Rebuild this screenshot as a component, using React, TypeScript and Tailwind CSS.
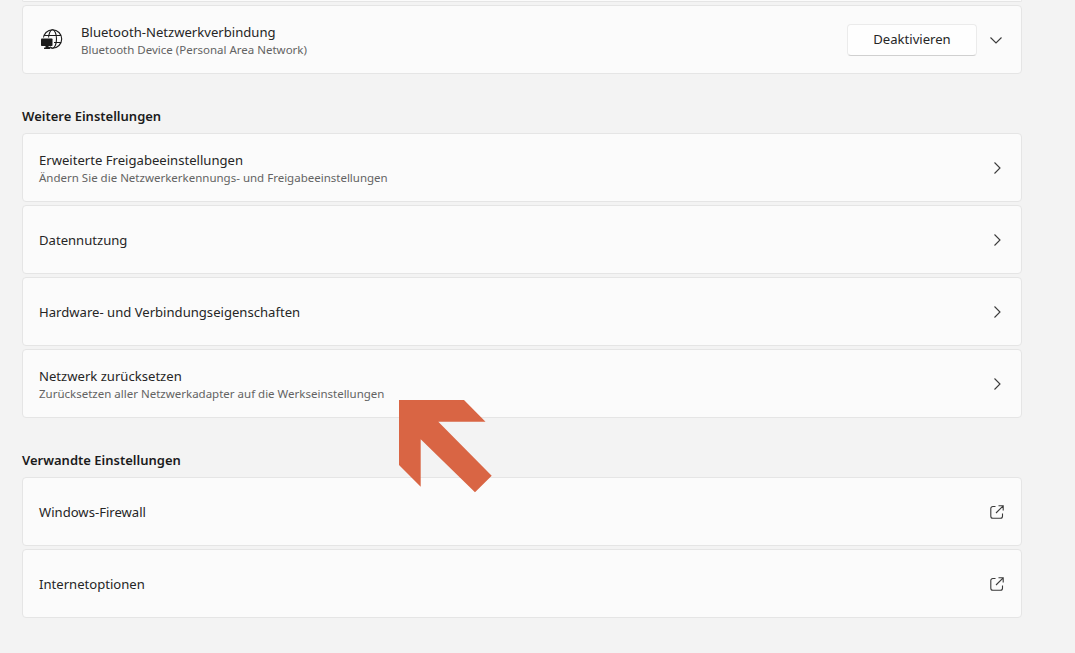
import React from "react";

function Chevron() {
  return (
    <svg width="16" height="16" viewBox="0 0 16 16" fill="none" stroke="#3a3a3a" strokeWidth="1.1" className="shrink-0">
      <path d="M5.5 2.5 L11 8 L5.5 13.5" />
    </svg>
  );
}

function External() {
  return (
    <svg width="16" height="16" viewBox="0 0 16 16" fill="none" stroke="#3a3a3a" strokeWidth="1.1" className="shrink-0">
      <path d="M6.5 2.5 H3.8 A2 2 0 0 0 1.8 4.5 V12.2 A2 2 0 0 0 3.8 14.2 H11.5 A2 2 0 0 0 13.5 12.2 V9.5" />
      <path d="M9.5 1.8 H14.2 V6.5 M14.2 1.8 L7 9" />
    </svg>
  );
}

function GlobeMonitor() {
  return (
    <svg width="22" height="22" viewBox="0 0 22 22" fill="none" className="ml-[2px] shrink-0">
      <g stroke="#1b1b1b" strokeWidth="1.1">
        <circle cx="11.5" cy="10" r="9.2" />
        <ellipse cx="11.5" cy="10" rx="4" ry="9.2" />
        <path d="M3 6.5 H20 M13 13.5 H20" />
      </g>
      <rect x="0" y="8.5" width="12.5" height="9" fill="#fbfbfb" />
      <rect x="0" y="9.5" width="11.5" height="7.5" rx="0.8" fill="#1b1b1b" />
      <rect x="4.5" y="17" width="3" height="2" fill="#1b1b1b" />
      <rect x="3" y="18.6" width="6" height="1.3" rx="0.5" fill="#1b1b1b" />
    </svg>
  );
}

function Row({ title, sub, icon }: { title: string; sub?: string; icon: "chevron" | "external" }) {
  return (
    <div className="flex h-[69px] items-center justify-between rounded-[4px] border border-[#e5e5e5] bg-[#fbfbfb] pl-4 pr-4">
      <div className="flex flex-col">
        <span className="text-[13.1px] leading-[18px] text-[#262626]">{title}</span>
        {sub && <span className="mt-px text-[11.5px] leading-[15px] text-[#636363]">{sub}</span>}
      </div>
      {icon === "chevron" ? <Chevron /> : <External />}
    </div>
  );
}

export default function App() {
  return (
    <div
      className="relative h-[653px] w-[1075px] overflow-hidden bg-[#f3f3f3] pl-[22px] pr-[53px]"
      style={{ fontFamily: '"Noto Sans", sans-serif' }}
    >
      <div className="h-[2px] rounded-b-[4px] border-x border-b border-[#e5e5e5] bg-[#fbfbfb]" />
      <div className="mt-[3px] flex h-[69px] items-center rounded-[4px] border border-[#e5e5e5] bg-[#fbfbfb] pl-4 pr-[18px]">
        <GlobeMonitor />
        <div className="ml-[18px] flex flex-col">
          <span className="text-[13.1px] leading-[18px] text-[#262626]">Bluetooth-Netzwerkverbindung</span>
          <span className="mt-px text-[11.5px] leading-[15px] text-[#636363]">Bluetooth Device (Personal Area Network)</span>
        </div>
        <button className="ml-auto flex h-8 w-[130px] items-center justify-center rounded-[4px] border border-[#ebebeb] border-b-[#d0d0d0] bg-[#fefefe] text-[13.1px] text-[#262626]">
          Deaktivieren
        </button>
        <svg width="14" height="14" viewBox="0 0 14 14" fill="none" stroke="#3a3a3a" strokeWidth="1.1" className="ml-3 shrink-0">
          <path d="M1.5 4.5 L7 10 L12.5 4.5" />
        </svg>
      </div>

      <h2 className="mt-[33px] text-[13px] font-semibold leading-[18px] text-[#1b1b1b]">Weitere Einstellungen</h2>
      <div className="mt-2 flex flex-col gap-[3px]">
        <Row title="Erweiterte Freigabeeinstellungen" sub="Ändern Sie die Netzwerkerkennungs- und Freigabeeinstellungen" icon="chevron" />
        <Row title="Datennutzung" icon="chevron" />
        <Row title="Hardware- und Verbindungseigenschaften" icon="chevron" />
        <Row title="Netzwerk zurücksetzen" sub="Zurücksetzen aller Netzwerkadapter auf die Werkseinstellungen" icon="chevron" />
      </div>

      <h2 className="mt-[33px] text-[13px] font-semibold leading-[18px] text-[#1b1b1b]">Verwandte Einstellungen</h2>
      <div className="mt-2 flex flex-col gap-[3px]">
        <Row title="Windows-Firewall" icon="external" />
        <Row title="Internetoptionen" icon="external" />
      </div>

      <svg className="absolute left-0 top-0" width="1075" height="653" fill="none">
        <polygon
          points="399,400 464,400 485.5,421.7 438.3,421.7 491.7,475.7 475,492.3 420.7,439.3 420.7,486.7 399,465"
          fill="#d96544"
        />
      </svg>
    </div>
  );
}
